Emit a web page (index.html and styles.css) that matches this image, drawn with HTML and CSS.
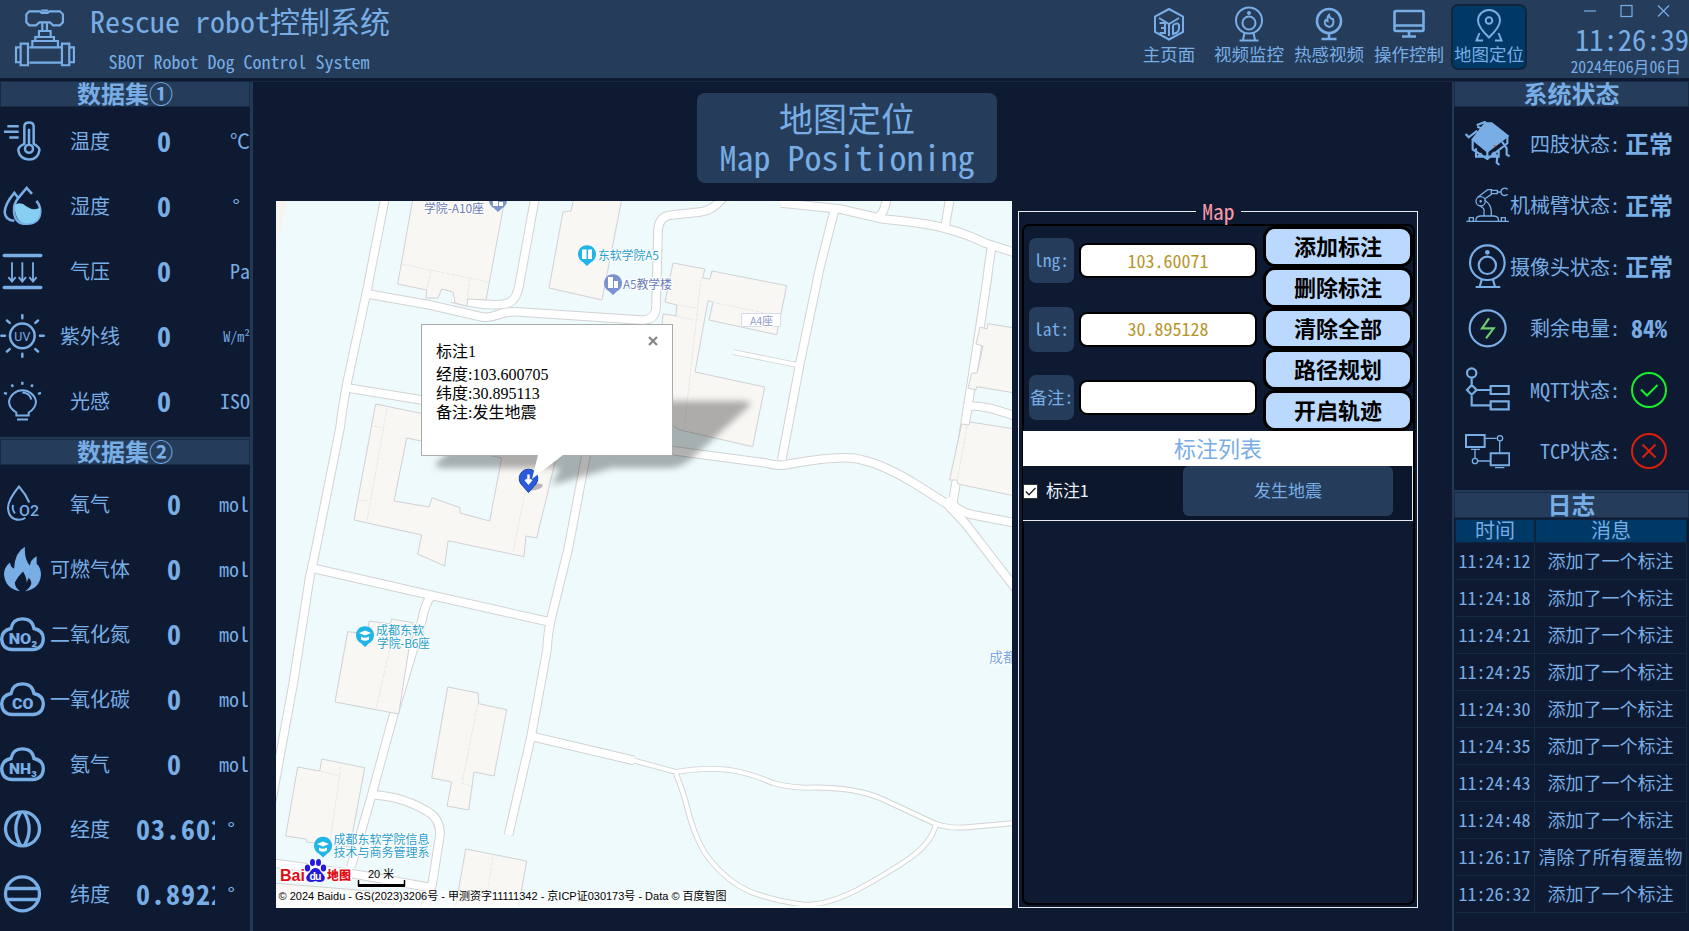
FILE: index.html
```html
<!DOCTYPE html>
<html lang="zh-CN">
<head>
<meta charset="utf-8">
<title>Rescue robot控制系统</title>
<link rel="stylesheet" href="styles.css">
</head>
<body>
<div class="app">
<header class="top">
  <svg class="logo" viewBox="36 20 200 190" fill="none" stroke="currentColor" stroke-width="6.500">
    <path d="M88 33H120L125 38H143L148 33H180L189 42V66L180 75H160L150 66H118L108 75H88L79 66V42Z"/><path d="M127 66V91M141 66V91M117 108V92H152V108M106 122V110H162V122M97 138V122H174V138M88 141H184M88 187H184M124 31H144"/><path d="M62 130H84V195H62ZM186 130H208V195H186ZM62 141H48V186H62M208 141H222V186H208"/>
  </svg>
  <div class="brand"><h1>Rescue robot控制系统</h1><p>SBOT Robot Dog Control System</p></div>
  <nav class="nav">
    <a><svg viewBox="0 0 36 36"><path d="M18 3L32 10.500V26L18 33.500L4 26V10.500Z"/><path d="M8 12L18 18L28 12M18 18V30"/><path d="M8.500 17H14V27H8.500M10 22H14M22 19V28L26 26.500Q28 25 28 22V19Q27 16 22 19"/></svg><span>主页面</span></a>
    <a><svg viewBox="0 0 36 36"><circle cx="18" cy="14.500" r="13"/><circle cx="18" cy="17" r="6.500"/><circle cx="18" cy="7" r="1" fill="currentColor"/><path d="M13.500 27L12 34M22.500 27L24 34M8.500 34.500H27.500"/></svg><span>视频监控</span></a>
    <a><svg viewBox="0 0 36 36"><g class="thick"><circle cx="18" cy="15" r="12"/><path d="M18 27V32M10.500 33H25.500"/></g><path d="M18 9Q19 13 22 13Q24 20 18 21Q12 19 14.500 14L16.500 15Q16 11 18 9Z"/></svg><span>热感视频</span></a>
    <a><svg viewBox="0 0 36 36"><g class="thick"><rect x="3.500" y="5" width="29" height="20" rx="1.500"/><path d="M3.500 19.500H32.500M18 25V30M11 30.500H25"/></g></svg><span>操作控制</span></a>
    <a class="on"><svg viewBox="0 0 36 36"><path d="M18 31.500Q7 21 7 14.500A11 10.500 0 0 1 29 14.500Q29 21 18 31.500Z"/><circle cx="18" cy="14.500" r="3.300"/><path d="M8.500 27L5.500 34.500H12M27.500 27L30.500 34.500H24"/></svg><span>地图定位</span></a>
  </nav>
  <div class="corner">
    <div class="win"><svg viewBox="0 0 88 14" fill="none" stroke="currentColor" stroke-width="1.200"><path d="M1 7H13"/><rect x="38" y="1.500" width="11" height="11"/><path d="M75 1.500L86 12.500M86 1.500L75 12.500"/></svg></div>
    <div class="clock">11:26:39</div>
    <div class="date">2024年06月06日</div>
  </div>
</header>
<div class="body">
<aside class="left">
  <section class="one">
    <h2>数据集①</h2>
    <div class="row"><svg viewBox="0 355.500 135 135"><path d="M73 430V378Q73 366 87 366Q101 366 101 378V430Q120 440 118 450Q114 477 87 477Q59 475 55 450Q54 438 73 430ZM87 385V432"/><circle cx="87" cy="445" r="12"/><path d="M22 377H56M12 394H56M28 411H56"/></svg><span>温度</span><b>0</b><i>℃</i></div>
    <div class="row"><svg viewBox="0 550.500 135 135"><path d="M57 590Q40 610 42 632Q44 672 82 670Q120 668 121 632Q121 615 109 601M57 590L80 562L96 580M54 592L43 577Q15 610 14 635Q16 660 43 661"/><path class="flat" d="M44 614Q60 600 80 618Q100 632 120 622Q124 668 82 669Q44 668 44 614Z" fill="#86cef2"/></svg><span>湿度</span><b>0</b><i class="deg">°</i></div>
    <div class="row"><svg viewBox="0 55.500 135 135"><path class="bars" d="M13 75H122M13 171H122"/><path class="fine" d="M36 95V150M67 95V150M99 95V150M25 140L36 153L47 140M56 140L67 153L78 140M88 140L99 153L110 140"/></svg><span>气压</span><b>0</b><i>Pa</i></div>
    <div class="row"><svg viewBox="0 250.500 135 135"><circle cx="67" cy="316" r="37"/><path stroke-linecap="round" d="M67 254V263M67 370V379M4 316H15M120 316H131M21 270L29 277M114 270L106 277M21 363L29 356M114 363L106 356"/><text x="67" y="330" font-size="38" textLength="48" lengthAdjust="spacingAndGlyphs">UV</text></svg><span>紫外线</span><b>0</b><i class="sm">W/m²</i></div>
    <div class="row"><svg viewBox="0 445.500 135 135"><path class="mid" d="M49 555V546Q27 533 27 513A41 40 0 0 1 108 513Q107 534 86 546V555ZM51 567H84M67 486Q90 488 94 507"/><path d="M67 454V463M35 462L39 469M98 462L94 469M12 487L21 490M123 487L114 490"/></svg><span>光感</span><b>0</b><i>ISO</i></div>
  </section>
  <section class="two">
    <h2>数据集②</h2>
    <div class="row"><svg viewBox="0 34.500 135 135"><path class="mid" d="M88 96Q78 72 57 48Q24 88 24 112Q26 148 58 148Q70 147 76 142M39 103Q36 120 45 128"/><text class="md" x="87" y="136" font-size="46" textLength="60" lengthAdjust="spacingAndGlyphs">O2</text></svg><span>氧气</span><b>0</b><i>mol</i></div>
    <div class="row"><svg viewBox="0 229.500 135 135"><path class="flat" d="M75 229Q44 245 42 295Q32 290 30 276Q12 290 12 312Q16 355 60 362Q43 350 45 335Q52 320 69 303Q80 320 80 336L86 322Q94 330 94 340Q88 356 75 362Q120 355 123 312Q123 292 110 280V257Q90 268 90 286Q72 265 75 229Z" fill="currentColor"/></svg><span>可燃气体</span><b>0</b><i>mol</i></div>
    <div class="row"><svg viewBox="0 424.500 135 135"><path class="cloud" d="M33 474Q38 445 67 445Q97 445 102 474Q130 480 130 505Q128 536 98 537H36Q7 536 5 505Q6 480 33 474Z"/><text class="bd" x="69" y="519" font-size="46" textLength="86" lengthAdjust="spacingAndGlyphs">NO₂</text></svg><span>二氧化氮</span><b>0</b><i>mol</i></div>
    <div class="row"><svg viewBox="0 424.500 135 135"><path class="cloud" d="M33 474Q38 445 67 445Q97 445 102 474Q130 480 130 505Q128 536 98 537H36Q7 536 5 505Q6 480 33 474Z"/><text class="bd" x="68" y="519" font-size="46" textLength="64" lengthAdjust="spacingAndGlyphs">CO</text></svg><span>一氧化碳</span><b>0</b><i>mol</i></div>
    <div class="row"><svg viewBox="0 424.500 135 135"><path class="cloud" d="M33 474Q38 445 67 445Q97 445 102 474Q130 480 130 505Q128 536 98 537H36Q7 536 5 505Q6 480 33 474Z"/><text class="bd" x="69" y="520" font-size="46" textLength="84" lengthAdjust="spacingAndGlyphs">NH₃</text></svg><span>氨气</span><b>0</b><i>mol</i></div>
    <div class="row"><svg viewBox="0 319.500 135 135"><g class="cloud"><circle cx="67.500" cy="385" r="51"/><path d="M62 336Q33 385 62 435M73 336Q102 385 73 435"/></g></svg><span>经度</span><b class="coord">03.602</b><i class="deg2">°</i></div>
    <div class="row"><svg viewBox="0 514.500 135 135"><g class="cloud"><circle cx="67.500" cy="580" r="51"/><path d="M18 564H117M18 597H117"/></g></svg><span>纬度</span><b class="coord">0.8922</b><i class="deg2">°</i></div>
  </section>
</aside>

<main class="main">
  <div class="title"><div>地图定位</div><div>Map Positioning</div></div>
  <div class="work">
    <div class="map">
      <svg class="canvas" viewBox="276 201 736 707">
        <defs>
          <g id="roads">
            <path d="M385 198L366.700 291.700L347.300 381.700Q342 410 340 428L314 558Q310 575 309.300 580L293.300 683L270 810"/>
            <path d="M368 294L430 305L482 317Q490 318 500 314Q508 311 520 312L640 320Q655 321 656 308L658 232Q658 216 672 215L700 212Q712 211 724 197"/>
            <path d="M535 198L519 286Q516 302 505 304Q486 307 452 298"/>
            <path d="M348 388L422 400M660 449L766 463Q778 467 790 464Q845 454 862 460Q885 465 917 485L947 504L965 523L1016 589"/>
            <path d="M781 203L840 209L883 219Q925 223 940 227Q965 233 985 243L1016 253"/>
            <path d="M835 208L820 267L800 363L781.700 460M887 198Q883 218 876 217M950 198L944.500 230"/>
            <path d="M992 245Q990 255 987 280L975 360L953 502M965 408Q975 402 1015 416M948 498Q956 512 974 515L1015 523"/>
            <path d="M588 445L568 550L552 615Q548 630 547 650L531 737L508.500 835"/>
            <path d="M312 568L430 595L550 622M432 596Q426 600 422 620L393 717L372 794L351 867"/>
            <path d="M375 795Q405 797 430 813Q440 820 440 835L432 885L424 910M272 863Q340 872 360 875L433 888"/>
            <path d="M530 736L634 760.500"/>
          </g>
          <g id="paths">
            <path d="M733 352L797 365M630 759.500L676 772Q705 767 730 770Q750 773 773 783Q786 787 805 787.700Q850 786 880 798L936 824Q950 829 970 827L1015 823"/>
            <path d="M936 824Q932 842 910 858Q890 872 857 890Q825 906 803 904.500Q775 901 750 891.700Q728 882 710 860Q698 845 690 818Q683 790 676 774"/>
          </g>
          <g id="pin"><path d="M0 12L-4 8.200A9 9 0 1 1 4 8.200Z"/></g>
          <filter id="soft" x="-20%" y="-40%" width="140%" height="180%"><feGaussianBlur stdDeviation="3"/></filter>
        </defs>
        <rect x="276" y="201" width="736" height="707" fill="#eefafc"/>
        <path d="M276 201H287L276 252Z" fill="#f6f3f0"/>
        <g fill="none" stroke="#d2d3d5"><use href="#roads" stroke-width="9.600"/><use href="#paths" stroke-width="5.800"/></g>
        <g fill="none" stroke="#fff"><use href="#roads" stroke-width="7.600"/><use href="#paths" stroke-width="4"/></g>
        <g class="house">
          <path d="M413 198L397.700 284L426.700 290L426 298L438 298L441.700 289L453 292L455 303L466.700 306L468 299L486 300L505 198Z"/>
          <path d="M574 198L571 211L563 212L549 288L602 300L622 198Z"/>
          <path d="M673 263L704.700 269L702.700 278L710 279L712 271L786.700 285.700L776.700 334.700L709 320L713 302L708 300.700L695 372L764.700 387L752.700 446.700L680 430L653 413L663 314L676 315.700L677 305L665 302Z"/>
          <path fill-rule="evenodd" d="M375.700 404L560 442L536.700 538L526 536L524 556.700L448 540.700L444.700 566L417.700 554L421.700 535L354 520ZM406.700 438L501.700 458L489.700 521L460 513L460 507.700L432 497.700L429 507L394 501Z"/>
          <path d="M988 323.700L1015 328V393L976.700 386.700L976 390L968 388L971.700 373H977L983 346L976 344L980 327L987 329Z"/>
          <path d="M970 422L1015 429V496L958 484L957 480H949.500L961.700 424L969 425Z"/>
          <path d="M347.700 631.700L368 634L369 621L390 624L391.700 619L413 622.700L398.700 714L335 702Z"/>
          <path d="M447.700 687L478 693L478.700 703.700L506.700 709.700L494 776L474 772L468.700 810L447 806L451.700 782L431.700 778Z"/>
          <path d="M297.700 767L319.700 771L321.700 759L364.700 767.700L350 847L306.700 842L306 839L285.700 836Z"/>
          <path d="M465.700 849L526.700 861L518 910H455ZM272 883L395 893L392 910H272Z"/>
        </g>
        <g class="seam"><path d="M402 264L488 282M431 270L427 290M470 278L467 300M387 408L367 521M373 426L384 428M359 500L369 501M528 478L513 552M395 626L376 709M478 703L462 783L471 786M341 766L330 842M320 771L340 776M493 857L485 907M701 278L684 430M677 305L696 308M676 316L694 320M711 302L780 316M967 426L957 482"/></g>
        <path d="M498 401H742Q756 401 746 409L690 460Q680 468 668 468H612L552 485L560 468H442Q430 467 440 460Z" fill="#000" fill-opacity=".3" filter="url(#soft)"/>
        <ellipse cx="535" cy="487" rx="8" ry="3" fill="#777" fill-opacity=".5" transform="rotate(-12 535 487)"/>
        <path d="M528.500 492.500L521 484A9.300 9.300 0 1 1 536 484Z" fill="#2b5bd8" stroke="#1a3fb5"/>
        <path d="M528.500 474.500V482.500M525.500 479.500L528.500 483L531.500 479.500" stroke="#fff" stroke-width="2.500" fill="none"/>
        <g fill="#21b4e6"><use href="#pin" x="587" y="254"/><use href="#pin" x="365" y="635"/><use href="#pin" x="323" y="845.500"/></g>
        <g fill="#7c92d0"><use href="#pin" x="613" y="283"/><use href="#pin" x="498" y="200"/></g>
        <g fill="#fff"><path d="M582 249.500H586.500V259H582ZM588 249.500H592V259H588ZM359 633L365 630.500L371 633L365 635.500ZM361 636.500Q365 639 369 636.500V639.500Q365 642 361 639.500ZM317 844L323 841.500L329 844L323 846.500ZM319 847.500Q323 850 327 847.500V850.500Q323 853 319 850.500ZM608 277H613V288H608ZM614 281H618V288H614ZM493 200H498V206H493ZM499 202H503V206H499Z"/></g>
        <rect x="741.500" y="313.500" width="39" height="13" rx="1.500" fill="#fff" stroke="#d5dcea"/>
        <g class="poi">
          <text x="598" y="260" class="c1" textLength="61">东软学院A5</text>
          <text x="623" y="289" class="c2" textLength="49">A5教学楼</text>
          <text x="424" y="212.500" class="c2" textLength="60">学院-A10座</text>
          <text x="750" y="324.500" class="c3" font-size="11" textLength="23">A4座</text>
          <text x="376" y="634.500" class="c1">成都东软</text>
          <text x="377" y="647.500" class="c1" textLength="53">学院-B6座</text>
          <text x="333.500" y="844" class="c1">成都东软学院信息</text>
          <text x="333.500" y="857" class="c1">技术与商务管理系</text>
          <text x="989" y="662" class="c4">成都东软</text>
        </g>
        <g class="bd-logo">
          <g fill="none" stroke="#fff" stroke-width="5" stroke-linejoin="round"><ellipse cx="315" cy="875" rx="7" ry="5"/><path d="M307 868L312 862H318L323 868"/></g>
          <text x="280" y="881" textLength="25" lengthAdjust="spacingAndGlyphs">Bai</text>
          <g fill="#2319dc"><ellipse cx="307.500" cy="868" rx="2.700" ry="3.500"/><ellipse cx="312.500" cy="862.500" rx="2.500" ry="3.600"/><ellipse cx="318.500" cy="862.500" rx="2.500" ry="3.600"/><ellipse cx="323.500" cy="868" rx="2.700" ry="3.500"/><path d="M315.500 868Q319 868 321 872Q327 877 323.500 881Q320 883 315.500 881Q311 883 307.500 881Q304 877 310 872Q312 868 315.500 868Z"/></g>
          <text class="du" x="309.500" y="880" textLength="12">du</text>
          <text class="dt" x="327" y="880" textLength="24">地图</text>
        </g>
        <path d="M358.500 880.500V885.500H404.500V880.500" fill="none" stroke="#fff" stroke-width="4"/>
        <path d="M358.500 880V885.500H404.500V880" fill="none" stroke="#000" stroke-width="1.500"/><path d="M358 885.500H405" stroke="#000" stroke-width="3"/>
        <rect x="276" y="891" width="452" height="15" fill="#fff" fill-opacity=".6"/>
        <g class="legal"><text x="368" y="878" textLength="26">20 米</text><text x="278.500" y="900" textLength="448">© 2024 Baidu - GS(2023)3206号 - 甲测资字11111342 - 京ICP证030173号 - Data © 百度智图</text></g>
        <rect x="276" y="906" width="736" height="2" fill="#fff"/>
      </svg>
      <div class="popup"><p class="first">标注1</p><p>经度:103.600705</p><p>纬度:30.895113</p><p>备注:发生地震</p>
        <svg class="shut" viewBox="0 0 10 10"><path d="M1 1L9 9M9 1L1 9" stroke="#858585" stroke-width="2.200"/></svg>
        <svg class="tail" viewBox="0 0 32 25"><path d="M6 0L0 24L31 0Z" fill="#fff"/></svg>
      </div>
    </div>
    <fieldset class="group">
      <legend>Map</legend>
      <div class="inner">
        <div class="form">
          <div class="fields">
            <label><span>lng:</span><input value="103.60071"></label>
            <label><span>lat:</span><input value="30.895128"></label>
            <label><span>备注:</span><input value=""></label>
          </div>
          <div class="btns"><button>添加标注</button><button>删除标注</button><button>清除全部</button><button>路径规划</button><button>开启轨迹</button></div>
        </div>
        <div class="band">标注列表</div>
        <div class="item"><svg class="check" viewBox="0 0 15 15"><rect x=".5" y=".5" width="14" height="14" fill="#fff" stroke="#333"/><path d="M2.800 7.500L6 10.700L12.500 4" fill="none" stroke="#222" stroke-width="1.300"/></svg><span>标注1</span><div class="note">发生地震</div></div>
      </div>
    </fieldset>
  </div>
</main>

<aside class="right">
  <section class="status">
    <h2>系统状态</h2>
    <div class="st"><svg viewBox="75 120 135 140"><path class="solid" d="M98 178L136 130L155 130L203 168L142 214Z"/><path d="M98 178V208L142 237L202 190V168M142 212V237M108 205V230H176V210M125 220L112 231M155 220L172 231M77 162L86 172L112 152M110 136L134 126L150 138M112 140L128 146M186 185L200 205V224L209 229M160 216L172 230L170 248L178 255"/><circle class="flat" cx="164" cy="198" r="3" fill="#d4541e"/></svg><span>四肢状态:</span><b>正常</b></div>
    <div class="st"><svg viewBox="75 308 135 140"><g class="thin"><path d="M79 426H207M108 424V418Q112 410 122 410H160Q172 410 175 418V424M88 424V415H100V424M184 424V415H196V424M132 409V397M154 409V397M132 397Q135 386 120 380M154 397Q154 375 133 362M113 354L143 331H154V345L135 358M154 333H172V343H154M172 338H181M203 330Q192 322 184 332Q180 344 190 348Q198 350 203 345"/><circle cx="122" cy="366" r="14"/><circle cx="122" cy="366" r="2"/></g></svg><span>机械臂状态:</span><b>正常</b></div>
    <div class="st"><svg viewBox="75 489 135 140"><circle cx="142" cy="548" r="52"/><circle cx="142" cy="556" r="26"/><circle class="flat" cx="142" cy="517" r="7" fill="currentColor"/><path d="M125 599L119 620M159 599L165 620M107 621H181"/></svg><span>摄像头状态:</span><b>正常</b></div>
    <div class="st"><svg viewBox="75 672 135 140"><circle cx="143" cy="742" r="54"/><path d="M147 712L126 742H161L138 772" stroke="#6cce70"/></svg><span>剩余电量:</span><b>84%</b></div>
    <div class="st"><svg viewBox="75 857 135 140"><circle cx="95" cy="878" r="14"/><path d="M95 893V914L81 929L95 943L110 929L95 914M95 943V975H152M110 929H152M152 917H206V941H152ZM152 963H206V987H152Z"/></svg><span>MQTT状态:</span><svg class="mark ok" viewBox="0 0 36 36"><circle cx="18" cy="18" r="17"/><path d="M10 17.500L16 23.500L26.500 13"/></svg></div>
    <div class="st"><svg viewBox="75 1042 135 140"><path class="mid" d="M78 1063H134V1099H78ZM152 1118H208V1154H152Z"/><g class="thin"><path d="M136 1073H170M179 1082V1116M93 1106H120M105 1106V1132M114 1141H150M165 1161H193"/><circle cx="180" cy="1073" r="8"/><circle cx="105" cy="1141" r="8"/></g></svg><span>TCP状态:</span><svg class="mark no" viewBox="0 0 36 36"><circle cx="18" cy="18" r="17"/><path d="M11.500 11.500L24.500 24.500M24.500 11.500L11.500 24.500"/></svg></div>
  </section>
  <section class="log">
    <h2>日志</h2>
    <div class="tr th"><span>时间</span><span>消息</span></div>
    <div class="tr"><span>11:24:12</span><span>添加了一个标注</span></div>
    <div class="tr"><span>11:24:18</span><span>添加了一个标注</span></div>
    <div class="tr"><span>11:24:21</span><span>添加了一个标注</span></div>
    <div class="tr"><span>11:24:25</span><span>添加了一个标注</span></div>
    <div class="tr"><span>11:24:30</span><span>添加了一个标注</span></div>
    <div class="tr"><span>11:24:35</span><span>添加了一个标注</span></div>
    <div class="tr"><span>11:24:43</span><span>添加了一个标注</span></div>
    <div class="tr"><span>11:24:48</span><span>添加了一个标注</span></div>
    <div class="tr"><span>11:26:17</span><span>清除了所有覆盖物</span></div>
    <div class="tr"><span>11:26:32</span><span>添加了一个标注</span></div>
  </section>
</aside>
</div>
</div>
</body>
</html>
```
FILE: styles.css
```css
* { box-sizing: border-box; margin: 0; padding: 0; }
body {
  width: 1689px; height: 931px; overflow: hidden;
  background: #0e1a31; color: #78ade5;
  font-family: "Noto Sans Mono CJK SC", "Liberation Mono", "Noto Sans CJK SC", monospace;
  font-weight: 300; white-space: nowrap;
}
.app { display: flex; flex-direction: column; height: 931px; }

/* header */
.top { display: flex; height: 78px; background: #253d5b; flex: none; }
.logo { width: 66.600px; height: 63.300px; margin: 6.600px 11.400px 0 12px; flex: none; }
.brand { flex: 1; }
.brand h1 { font-size: 30px; font-weight: 300; line-height: 44px; margin-top: -2px; }
.brand p { font-size: 18px; line-height: 24px; margin: 7px 0 0 18.500px; }
.nav { display: flex; margin-top: 4px; }
.nav a { width: 76px; height: 66px; margin: 0 2px; display: flex; flex-direction: column; align-items: center; border: 2px solid transparent; border-radius: 7px; }
.nav a.on { background: #003965; border-color: #10263f; }
.nav svg { width: 36px; height: 36px; fill: none; stroke: currentColor; stroke-width: 2; flex: none; }
.nav .thick { stroke-width: 2.600; }
.nav span { font-size: 17.500px; line-height: 22px; margin-top: 1px; }
.corner { width: 160px; display: flex; flex-direction: column; align-items: flex-end; }
.win { height: 22px; padding: 4px 18px 0 0; }
.win svg { width: 88px; height: 14px; display: block; }
.clock { font-size: 28.500px; line-height: 34px; }
.date { font-size: 15.800px; line-height: 20px; padding: 1px 8px 0 0; }

.body { display: flex; height: 850px; margin-top: 3px; border-top: 1px solid #16273f; }
h2 { font-size: 24px; font-weight: 700; line-height: 21px; height: 24px; text-align: center; background: #253d5b; margin: 0 1px; outline: 1px solid #172b47; color: #78ade5; }

/* sensors */
.left { width: 253px; border-right: 3px solid #223956; flex: none; }
.one { height: 355px; }
.one h2 { margin-bottom: 2.500px; }
.two { border-top: 2px solid #223956; padding-top: 1px; }
.two h2 { margin-bottom: 7.500px; }
.row { height: 65px; display: grid; grid-template-columns: 45px 90px 58px 57px; align-items: center; }
.row > svg { width: 45px; height: 45px; fill: none; stroke: currentColor; stroke-width: 7.500; }
.row text { fill: currentColor; stroke: none; text-anchor: middle; font-family: Roboto, sans-serif; font-weight: 400; }
.row text.md { font-weight: 500; }
.row text.bd { font-weight: 900; }
.row .cloud { stroke-width: 10; }
.row .bars { stroke-width: 11; stroke-linecap: round; }
.row .fine { stroke-width: 5.500; }
.mid { stroke-width: 6; }
.thin { stroke-width: 4; }
.flat { stroke: none; }
.solid { fill: currentColor; }
.row span { font-size: 20px; line-height: 28px; text-align: center; margin-top: -1px; }
.row b { font-size: 28px; line-height: 34px; font-weight: 700; text-align: center; margin-top: -2px; }
.row i { font-style: normal; font-size: 20px; line-height: 28px; text-align: right; margin-top: -1px; }
.row i.sm { font-size: 14px; }
.row i.deg { padding-right: 10px; }
.two .row { grid-template-columns: 45px 90px 78px 37px; }
.two .row b.coord { letter-spacing: 1px; overflow: hidden; text-align: left; padding-left: 1px; margin-right: -2px; }
.two .row i { margin-left: -10px; padding-right: 1px; }
.two .row i.deg2 { padding-right: 15px; }

/* centre */
.main { flex: 1; padding-top: 11px; }
.title { width: 300px; height: 90px; margin-left: 444px; border-radius: 8px; background: #253d5b; font-size: 34px; line-height: 39px; text-align: center; padding-top: 5px; }
.work { display: flex; padding: 18px 0 0 23px; }
.map { width: 736px; height: 707px; position: relative; overflow: hidden; flex: none; }
.canvas { display: block; width: 736px; height: 707px; }
.house { fill: #f8f7f4; stroke: #d0d1d3; stroke-width: 1; }
.seam { fill: none; stroke: #e3e3e1; stroke-dasharray: 4 1; stroke-width: .8; }
.poi text { font-family: "Noto Sans CJK SC", sans-serif; font-weight: 400; font-size: 12px; paint-order: stroke; stroke: #fff; stroke-width: 2px; }
.poi .c1 { fill: #2aa0cb; } .poi .c2 { fill: #6a7bb3; } .poi .c3 { fill: #8f9dca; font-size: 11px; } .poi .c4 { fill: #79a8e2; font-size: 14px; }
.bd-logo text { font-family: "Liberation Sans", "Noto Sans CJK SC", sans-serif; font-weight: 700; font-size: 17px; fill: #e10b14; paint-order: stroke; stroke: #fff; stroke-width: 3px; }
.bd-logo .dt { font-size: 12px; font-family: "Noto Sans CJK SC", sans-serif; font-weight: 900; }
.bd-logo .du { font-size: 10.500px; fill: #fff; stroke: none; }
.legal text { font-family: "Liberation Sans", "Noto Sans CJK SC", sans-serif; font-weight: 400; font-size: 11px; fill: #000; }
.popup { position: absolute; left: 145px; top: 123px; width: 252px; height: 132px; background: #fff; border: 1px solid #ababab; color: #000; font: 400 16px/19px "Liberation Serif", "Noto Sans CJK SC", serif; padding: 17px 14px; }
.popup .first { margin-bottom: 4px; }
.shut { position: absolute; right: 14px; top: 11px; width: 10px; height: 10px; }
.tail { position: absolute; left: 110px; top: 130px; width: 32px; height: 25px; }

/* marker panel */
.group { width: 400px; height: 711px; margin: -4px 0 0 6px; border: 1px solid #e8edf2; padding: 0 2px 0 3px; }
legend { margin: 0 auto; padding: 0 6px; font-size: 21.500px; line-height: 28px; color: #f79aa9; text-align: center; }
.inner { height: 681px; margin-top: -1px; border: 2px solid #000; border-radius: 7px; }
.form { display: flex; height: 205px; }
.fields { width: 239px; padding: 12px 0 0 5px; display: flex; flex-direction: column; gap: 23.500px; }
.fields label { display: flex; align-items: center; height: 45px; gap: 5px; }
.fields span { width: 45px; height: 45px; border-radius: 7px; background: #253d5b; font-size: 17.500px; line-height: 43px; text-align: center; }
.fields input { width: 178px; height: 35px; border: 2px solid #000; border-radius: 8px; background: #fff; color: #b6962a; font: inherit; font-size: 18px; text-align: center; padding-bottom: 2px; }
.btns { width: 150px; }
.btns button { display: block; width: 150px; height: 41px; border: 3px solid #000; border-radius: 12px; background: #bbd9ff; color: #000; font: 700 22px/30px "Noto Sans CJK SC", sans-serif; padding-bottom: 3px; }
.band { height: 35px; background: #fff; margin-left: -1px; font-size: 22px; line-height: 32px; font-weight: 500; text-align: center; }
.item { height: 55px; border: solid #e8edf2; border-width: 0 1px 1px 0; display: flex; align-items: center; margin-left: -1px; background: #0c172c; }
.check { width: 15px; height: 15px; margin: 0 8px 4px 0; }
.item span { color: #e6f0fa; font-size: 17px; line-height: 24px; flex: 1; padding-bottom: 6px; }
.note { width: 210px; height: 50px; margin: 0 19px 4px 0; border-radius: 6px; background: #253d5b; font-size: 17px; line-height: 47px; text-align: center; }

/* status and log */
.right { width: 237px; border-left: 2px solid #223956; flex: none; }
.status { height: 407.500px; }
.status h2 { margin-bottom: 7px; }
.st { height: 61.500px; display: grid; grid-template-columns: 56px 110px 58px; align-items: center; }
.st > svg { width: 45px; height: 46.700px; margin-left: 11px; fill: none; stroke: currentColor; stroke-width: 6.500; }
.st span { font-size: 20px; line-height: 28px; justify-self: end; }
.st b { font-size: 24px; line-height: 32px; font-weight: 700; text-align: center; margin-top: -1px; }
.st svg.mark { width: 36px; height: 36px; margin: 0 auto; stroke-width: 2; }
.st svg.ok { stroke: #16f02c; }
.st svg.no { stroke: #dc1e0c; }
.log { border-top: 2px solid #223956; padding-top: 1px; }
.log h2 { margin-bottom: 2px; }
.tr { display: grid; grid-template-columns: 80px 152px; margin-left: 1px; height: 37px; }
.tr span { border: solid #162943; border-width: 0 1px 1px 0; font-size: 18px; line-height: 35px; text-align: center; }
.tr.th { height: 24px; }
.tr.th span { background: #003965; border: 1px solid #10233c; font-size: 20px; line-height: 20px; }
```
